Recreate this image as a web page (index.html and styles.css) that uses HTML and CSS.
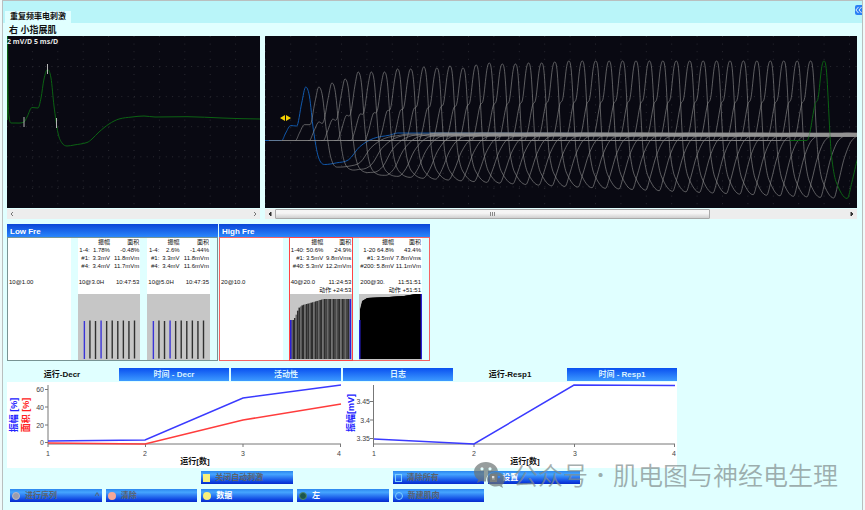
FILE: index.html
```html
<!DOCTYPE html>
<html lang="zh-CN">
<head>
  <meta charset="UTF-8">
  <meta name="viewport" content="width=device-width, initial-scale=1.0">
  <title>重复频率电刺激</title>
  <link rel="stylesheet" href="styles.css">
</head>
<body>
  <div class="app">
    <header class="header">
      <button class="tab-main">重复频率电刺激</button>
      <button class="collapse-btn" aria-label="收起">
        <svg viewBox="0 0 8 10"><path d="M4 1.5 1 5l3 3.500M7.500 1.500 4.500 5l3 3.500"/></svg>
      </button>
    </header>

    <main class="content">
      <h1 class="muscle">右 小指展肌</h1>

      <!-- Scopes -->
      <div class="scopes">
        <div class="scope">
          <svg id="scope-single" class="scope-screen" viewBox="0 0 253 172" preserveAspectRatio="none"></svg>
          <span class="scope-scale">2 mV/D 5 ms/D</span>
          <div class="scrollbar">
            <button class="scroll-arrow" aria-label="左"><svg viewBox="0 0 4 6"><path d="M3 1 1 3l2 2"/></svg></button>
            <div class="scroll-track"></div>
            <button class="scroll-arrow" aria-label="右"><svg viewBox="0 0 4 6"><path d="M1 1l2 2-2 2"/></svg></button>
          </div>
        </div>
        <div class="scope">
          <svg id="scope-train" class="scope-screen" viewBox="0 0 592 172" preserveAspectRatio="none"></svg>
          <div class="scrollbar">
            <button class="scroll-arrow dark" aria-label="左"><svg viewBox="0 0 4 6"><path d="M3 1 1 3l2 2z"/></svg></button>
            <div class="scroll-track"><div class="scroll-thumb"><i></i><i></i><i></i></div></div>
            <button class="scroll-arrow dark" aria-label="右"><svg viewBox="0 0 4 6"><path d="M1 1l2 2-2 2z"/></svg></button>
          </div>
        </div>
      </div>

      <!-- Series -->
      <div class="groups">
        <section class="group">
          <h2>Low Fre</h2>
          <div class="group-body">
            <div class="card"><div class="card-run"><span>10@1.00</span></div></div>
            <div class="card">
              <table>
                <tr><th></th><th>振幅</th><th>面积</th></tr>
                <tr><td>1-4:</td><td>1.78%</td><td>-0.48%</td></tr>
                <tr><td>#1:</td><td>3.3mV</td><td>11.8mVm</td></tr>
                <tr><td>#4:</td><td>3.4mV</td><td>11.7mVm</td></tr>
              </table>
              <div class="card-run"><span>10@3.0H</span><span>10:47:53</span></div>
              <svg class="bars" data-kind="low" viewBox="0 0 63 66" preserveAspectRatio="none"></svg>
            </div>
            <div class="card">
              <table>
                <tr><th></th><th>振幅</th><th>面积</th></tr>
                <tr><td>1-4:</td><td>2.6%</td><td>-1.44%</td></tr>
                <tr><td>#1:</td><td>3.3mV</td><td>11.8mVm</td></tr>
                <tr><td>#4:</td><td>3.4mV</td><td>11.6mVm</td></tr>
              </table>
              <div class="card-run"><span>10@5.0H</span><span>10:47:35</span></div>
              <svg class="bars" data-kind="low" viewBox="0 0 63 66" preserveAspectRatio="none"></svg>
            </div>
          </div>
        </section>

        <section class="group group-active">
          <h2>High Fre</h2>
          <div class="group-body">
            <div class="card"><div class="card-run"><span>20@10.0</span></div></div>
            <div class="card card-selected">
              <table>
                <tr><th></th><th>振幅</th><th>面积</th></tr>
                <tr><td>1-40:</td><td>50.6%</td><td>24.9%</td></tr>
                <tr><td>#1:</td><td>3.5mV</td><td>9.8mVms</td></tr>
                <tr><td>#40:</td><td>5.3mV</td><td>12.2mVm</td></tr>
              </table>
              <div class="card-run"><span>40@20.0</span><span>11:24:53</span></div>
              <div class="card-note">动作 +24:53</div>
              <svg class="bars" data-kind="forty" viewBox="0 0 63 66" preserveAspectRatio="none"></svg>
            </div>
            <div class="card">
              <table>
                <tr><th></th><th>振幅</th><th>面积</th></tr>
                <tr><td>1-20</td><td>64.8%</td><td>43.4%</td></tr>
                <tr><td>#1:</td><td>3.5mV</td><td>7.8mVms</td></tr>
                <tr><td>#200:</td><td>5.8mV</td><td>11.1mVm</td></tr>
              </table>
              <div class="card-run"><span>200@30.</span><span>11:51:51</span></div>
              <div class="card-note">动作 +51:51</div>
              <svg class="bars" data-kind="full" viewBox="0 0 63 66" preserveAspectRatio="none"></svg>
            </div>
          </div>
        </section>
      </div>

      <!-- Trends -->
      <div class="trends">
        <nav class="tabs">
          <button class="tab active">运行-Decr</button>
          <button class="tab">时间 - Decr</button>
          <button class="tab">活动性</button>
          <button class="tab">日志</button>
          <button class="tab active">运行-Resp1</button>
          <button class="tab">时间 - Resp1</button>
        </nav>
        <div class="charts">
          <svg class="chart" viewBox="0 0 335 86">
            <path class="axis" d="M41 3V62H334M38 7.500h3M38 25h3M38 43h3M38 60.500h3M41 62v3M138.500 62v3M236 62v3M333.500 62v3"/>
            <g class="ytext"><text x="37" y="10">60</text><text x="37" y="28">40</text><text x="37" y="46">20</text><text x="37" y="63">0</text></g>
            <g class="xtext"><text x="41" y="74">1</text><text x="138" y="74">2</text><text x="236" y="74">3</text><text x="332" y="74">4</text></g>
            <path class="line-red" d="M41 61 138 62 236 38 334 22"/>
            <path class="line-blue" d="M41 59 138 58 236 16 334 3"/>
            <text class="label" x="188" y="82">运行[数]</text>
            <text class="label blue" transform="translate(10 33) rotate(-90)">振幅 [%]</text>
            <text class="label red" transform="translate(22 33) rotate(-90)">面积 [%]</text>
          </svg>
          <svg class="chart" viewBox="0 0 335 86">
            <path class="axis" d="M31.500 3V62H333M28 19.500h3M28 38h3M28 56.500h3M31.500 62v3M132 62v3M232.500 62v3M332.500 62v3"/>
            <g class="ytext"><text x="28" y="22">3.45</text><text x="28" y="41">3.4</text><text x="28" y="59">3.35</text></g>
            <g class="xtext"><text x="32" y="74">1</text><text x="132" y="74">2</text><text x="233" y="74">3</text><text x="332" y="74">4</text></g>
            <path class="line-blue" d="M32 57 132 62 232 3 333 3.500"/>
            <text class="label" x="183" y="82">运行[数]</text>
            <text class="label blue" transform="translate(12 31) rotate(-90)">振幅[mV]</text>
          </svg>
        </div>
      </div>

      <!-- Actions -->
      <div class="actions">
        <button class="btn col-3" disabled><i class="mark yellow"></i>关闭自动刺激</button>
        <button class="btn col-5" disabled><i class="mark outline"></i>清除所有</button>
        <button class="btn col-6"><i class="mark stop"></i>设置</button>
        <button class="btn col-1" disabled><i class="mark round gray"></i>进行序列<span class="caret">^</span></button>
        <button class="btn" disabled><i class="mark round pink"></i>清除</button>
        <button class="btn"><i class="mark round yellow"></i>数据</button>
        <button class="btn"><i class="mark round green"></i>左</button>
        <button class="btn" disabled><i class="mark round outline"></i>新建肌肉</button>
      </div>

      <div class="watermark">
        <svg viewBox="0 0 32 28">
          <path fill-rule="evenodd" d="M13 2C6 2 1 6.500 1 12c0 3 1.500 5.800 4.200 7.600L4 23l4.200-2.100c1.500.5 3 .7 4.800.7-.2-6.500 4.500-10.600 12-10.600C24 5.500 19 2 13 2zM9 7.200a1.600 1.600 0 1 1 0 3.200 1.600 1.600 0 0 1 0-3.200zm8 0a1.600 1.600 0 1 1 0 3.200 1.600 1.600 0 0 1 0-3.200z"/>
          <path fill-rule="evenodd" d="M23 12c-5 0-9 3.300-9 7.300s4 7.300 9 7.300c1.200 0 2.300-.2 3.300-.5L30 28l-1-3c2-1.500 3-3.400 3-5.700 0-4-4-7.300-9-7.300zm-3 3.800a1.300 1.300 0 1 1 0 2.600 1.300 1.300 0 0 1 0-2.600zm6 0a1.300 1.300 0 1 1 0 2.600 1.300 1.300 0 0 1 0-2.600z"/>
        </svg>
        <span>公众号</span><span class="dot">·</span><span>肌电图与神经电生理</span>
      </div>
    </main>
  </div>
  <script src="script.js"></script>
</body>
</html>
```
FILE: styles.css
```css
* {
  margin: 0;
  padding: 0;
  box-sizing: border-box;
}

body {
  min-height: 100vh;
  padding: 0 2px;
  background: #eefafa;
  font-family: "Liberation Sans", "Noto Sans CJK SC", sans-serif;
  font-size: 8px;
  color: #111;
}

button {
  border: none;
  background: none;
  font: inherit;
  color: inherit;
}

.app {
  min-height: 100vh;
  background: #e0ffff;
  border: 1px solid #b9bfbf;
  border-bottom: none;
}

.header {
  display: flex;
  justify-content: space-between;
  align-items: flex-end;
  height: 22px;
  padding-left: 2px;
  background: #b9f5f9;
}

.tab-main {
  height: 12px;
  padding: 0 5px;
  background: #e0ffff;
  font-weight: bold;
  line-height: 12px;
}

.collapse-btn {
  align-self: flex-start;
  width: 7px;
  height: 10px;
  margin-top: 4px;
  border-radius: 2px 0 0 2px;
  background: #2b80f5;
}

.collapse-btn svg {
  display: block;
  width: 7px;
  height: 10px;
  fill: none;
  stroke: #fff;
}

.content {
  position: relative;
  padding: 0 5px 0 4px;
}

.muscle {
  height: 13px;
  padding-left: 2px;
  font-size: 9px;
  line-height: 15px;
}

/* Scopes */
.scopes {
  display: grid;
  grid-template-columns: 253fr 592fr;
  gap: 5px;
  margin-bottom: 5px;
}

.scope {
  position: relative;
}

.scope-screen {
  display: block;
  width: 100%;
  height: 172px;
  background: #090912;
}

.scope-screen path,
.scope-screen line {
  fill: none;
  stroke-width: 1;
}

.scope-screen .grid {
  stroke: #2a2a32;
}

.scope-screen .trace {
  stroke: #8a8a8a;
  stroke-opacity: 0.65;
}

.scope-screen .trace.first {
  stroke: #1159ad;
  stroke-opacity: 1;
}

.scope-screen .trace.last {
  stroke: #0b6313;
  stroke-opacity: 1;
}

.scope-screen .cursor {
  stroke: #b5b5b5;
}

.scope-screen .band {
  stroke: #999;
  stroke-width: 4;
  stroke-opacity: 0.6;
}

.scope-screen .handle {
  fill: #f5d000;
}

.scope-scale {
  position: absolute;
  top: 1px;
  left: 0;
  font-family: "Noto Sans", sans-serif;
  font-size: 7px;
  font-weight: bold;
  line-height: 9px;
  color: #e4e4e4;
}

.scrollbar {
  display: flex;
  height: 10px;
  margin-top: 1px;
  background: #ededed;
}

.scroll-arrow {
  width: 10px;
}

.scroll-arrow svg {
  display: block;
  width: 4px;
  height: 6px;
  margin: 0 auto;
  fill: none;
  stroke: #777;
}

.scroll-arrow.dark svg {
  fill: #333;
  stroke: #333;
}

.scroll-track {
  flex: 1;
}

.scroll-thumb {
  display: flex;
  justify-content: center;
  align-items: center;
  gap: 1px;
  width: 76%;
  height: 10px;
  border: 1px solid #a9a9a9;
  border-radius: 1px;
  background: linear-gradient(#f5f5f5 40%, #cfcfcf);
}

.scroll-thumb i {
  width: 1px;
  height: 4px;
  background: #888;
}

/* Series */
.groups {
  display: flex;
  gap: 1px;
  margin-bottom: 7px;
}

.group {
  width: 211px;
}

.group h2 {
  height: 13px;
  padding-left: 3px;
  background: linear-gradient(#0a45d8, #2a86fb);
  font-size: 8px;
  line-height: 15px;
  color: #fff;
}

.group-body {
  display: grid;
  grid-template-columns: repeat(3, 1fr);
  gap: 7px;
  height: 124px;
  padding-right: 7px;
  border: 1px solid #789494;
}

.group-active .group-body {
  border-color: #f46464;
}

.card {
  display: flex;
  flex-direction: column;
  min-width: 0;
  background: #fff;
  font-size: 6px;
  line-height: 8px;
  white-space: nowrap;
}

.card:first-child {
  padding-top: 40px;
}

.card-selected {
  outline: 1px solid #f44;
}

.card table {
  width: 100%;
  margin-bottom: 8px;
  padding-right: 1px;
  border-spacing: 0;
}

.card th,
.card td {
  height: 8px;
  text-align: right;
}

.card th {
  font-weight: normal;
}

.card-run {
  display: flex;
  justify-content: space-between;
  padding: 0 1px;
}

.card-note {
  padding-right: 1px;
  text-align: right;
}

.bars {
  display: block;
  width: 100%;
  height: 66px;
  margin-top: auto;
  background: #c6c6c6;
}

/* Trends */
.trends {
  max-width: 670px;
  margin-bottom: 3px;
}

.tabs {
  display: grid;
  grid-template-columns: repeat(6, 1fr);
  gap: 2px;
  margin-bottom: 1px;
}

.tab {
  height: 13px;
  background: linear-gradient(#0a50f0, #3d9bff);
  font-weight: bold;
  line-height: 13px;
  color: #d8f2ff;
}

.tab.active {
  background: none;
  color: #111;
}

.charts {
  display: grid;
  grid-template-columns: 1fr 1fr;
  background: #fff;
}

.chart {
  display: block;
  width: 100%;
}

.chart path {
  fill: none;
}

.chart text {
  font-size: 7px;
  fill: #444;
}

.chart .axis {
  stroke: #777;
}

.chart .line-blue {
  stroke: #3a3aff;
  stroke-width: 1.5;
}

.chart .line-red {
  stroke: #ff3c3c;
  stroke-width: 1.5;
}

.chart .ytext {
  text-anchor: end;
}

.chart .xtext,
.chart .label {
  text-anchor: middle;
}

.chart .label {
  font-size: 8px;
  font-weight: bold;
  fill: #111;
}

.chart .label.blue {
  font-size: 9px;
  fill: #22f;
}

.chart .label.red {
  font-size: 9px;
  fill: #f22;
}

/* Actions */
.actions {
  display: grid;
  grid-template-columns: repeat(6, 1fr);
  gap: 5px 4px;
  max-width: 573px;
  padding-left: 3px;
}

.col-1 { grid-column: 1; }
.col-3 { grid-column: 3; }
.col-5 { grid-column: 5; }
.col-6 { grid-column: 6; }

.btn {
  display: flex;
  align-items: center;
  gap: 5px;
  height: 13px;
  padding: 0 2px;
  background: linear-gradient(#2c86ee, #45a5ff 25%, #0b3fe0 85%, #0a2bc8);
  font-size: 8px;
  font-weight: bold;
  line-height: 13px;
  color: #fff;
}

.btn:disabled {
  color: #5a626e;
}

.mark {
  width: 7px;
  height: 8px;
}

.mark.round {
  width: 8px;
  border-radius: 50%;
}

.mark.yellow { background: #f8f07c; }
.mark.gray { background: #9c9cac; border: 1px solid #b8b8c8; }
.mark.pink { background: #f5a898; }
.mark.green { background: #1d564c; border: 1px solid #4d8a70; }
.mark.outline { border: 1px solid #7fd0ff; }
.mark.stop { background: #ddd; border: 2px solid #999; }

.caret {
  margin-left: auto;
}

.watermark {
  position: absolute;
  right: 24px;
  bottom: 12px;
  display: flex;
  align-items: center;
  height: 32px;
  font-family: "Noto Sans CJK SC", sans-serif;
  font-size: 25px;
  font-weight: 350;
  line-height: 32px;
  color: #808c8c;
  opacity: 0.7;
  white-space: nowrap;
  pointer-events: none;
}

.watermark svg {
  width: 32px;
  height: 28px;
  margin-right: 8px;
  fill: #6c7474;
}

.watermark .dot {
  width: 25px;
  font-size: 16px;
  font-weight: bold;
  text-align: center;
}
```
FILE: script.js
```js
const NS = 'http://www.w3.org/2000/svg';

function add(svg, tag, attrs) {
  const el = document.createElementNS(NS, tag);
  for (const key in attrs) el.setAttribute(key, attrs[key]);
  svg.appendChild(el);
}

// Smooth curve through the points that does not overshoot at peaks
function smooth(pts) {
  let d = `M${pts[0][0]} ${pts[0][1]}`;
  for (let i = 0; i < pts.length - 1; i++) {
    const a = pts[i - 1] || pts[i], b = pts[i], c = pts[i + 1], e = pts[i + 2] || c;
    const k = (c[0] - b[0]) / 3;
    const s1 = c[0] === a[0] ? 0 : (c[1] - a[1]) / (c[0] - a[0]);
    const s2 = e[0] === b[0] ? 0 : (e[1] - b[1]) / (e[0] - b[0]);
    const flat1 = (b[1] - a[1]) * (c[1] - b[1]) <= 0;
    const flat2 = (c[1] - b[1]) * (e[1] - c[1]) <= 0;
    d += `C${b[0] + k} ${b[1] + (flat1 ? 0 : s1 * k)} ${c[0] - k} ${c[1] - (flat2 ? 0 : s2 * k)} ${c[0]} ${c[1]}`;
  }
  return d;
}

function drawGrid(svg, width, startX) {
  for (let x = startX; x < width; x += 25.4) {
    add(svg, 'line', { class: 'grid', x1: x, x2: x, y1: 0, y2: 172, 'stroke-dasharray': '1 6.6' });
  }
  for (let y = 30.5; y < 172; y += 30.1) {
    add(svg, 'line', { class: 'grid', x1: 0, x2: width, y1: y, y2: y, 'stroke-dasharray': '1 5.35' });
  }
}

// Single response
const single = document.getElementById('scope-single');
drawGrid(single, 253, 25.4);
add(single, 'path', {
  class: 'trace last',
  d: smooth([[0.5, 0], [1, 60], [2, 80], [4, 87], [9, 87], [17, 86], [20, 81], [25, 71.5], [31, 72], [34, 62],
    [37, 43], [40.5, 33.5], [44, 42], [47, 70], [51, 97], [55, 107], [60, 110], [67, 109], [80, 106.500], [85, 103],
    [92, 96], [102, 88], [112, 83], [125, 81], [137, 80], [148, 81], [180, 80.7], [215, 82], [253, 83]])
});
add(single, 'line', { class: 'trace last', x1: 0.5, x2: 0.5, y1: 0, y2: 84 });
for (const [x, y] of [[17, 81], [40.5, 28], [49.5, 82]]) {
  add(single, 'line', { class: 'cursor', x1: x, x2: x, y1: y, y2: y + 10 });
}

// Train of 40 responses: x offset from the peak, level as a share of peak (+) or trough (-)
const early = [[-24, 0], [-20, .14], [-15, .28], [-9, .27], [-4, .7], [0, 1], [3.7, .83], [7.7, .2], [12.7, -.69],
  [19, -1], [31, -.93], [43, -.8], [54, -.26], [68, .04], [84, .1]];
const late = [[-17, 0], [-14, .1], [-9, .45], [-5.7, .54], [-2.3, .91], [0, 1], [2.7, .86], [6, .1], [7.7, -.28],
  [12, -.7], [23.3, -1], [28, -.72], [34, -.3], [42, .01], [56, .08]];
const tops = [51, 51, 47, 43, 36, 36, 36, 33, 33, 31, 32, 30, 32, 29, 27, 28, 28, 27, 27, 26];
const base = 104.5;

const train = document.getElementById('scope-train');
drawGrid(train, 592, 0.3);

function drawResponse(i) {
  const cx = i < 20 ? 40.7 + i * 13.1 : 303.7 + (i - 20) * 13.43;
  const mix = i === 39 ? 1 : 1 - Math.exp(-Math.pow(i / 6, 1.3));
  const up = base - (tops[i] || 25);
  const down = 24 + 8 * Math.min(1, i / 4) + 26 * Math.pow(i / 39, 0.8);
  const pts = [[Math.max(0, cx - (i === 39 ? 34 : 50)), base]];
  early.forEach(([dx, v], n) => {
    const x = dx + (late[n][0] - dx) * mix;
    const level = v + (late[n][1] - v) * mix;
    pts.push([cx + x, base - level * (level > 0 ? up : down)]);
  });
  const end = pts[pts.length - 1][0];
  if (end < 592) pts.push([Math.max(end + 8, 130 + i * 5), 97 + i % 4], [600, 98 + i % 3]);
  const type = i === 0 ? ' first' : i === 39 ? ' last' : '';
  add(train, 'path', { class: 'trace' + type, d: smooth(pts) });
}

drawResponse(0);
for (let i = 1; i < 40; i++) drawResponse(i);
add(train, 'line', { class: 'band', x1: 165, x2: 592, y1: 98.5, y2: 98.5 });
add(train, 'path', { class: 'handle', d: 'M15 82l5-3v6zM26 82l-5-3v6z' });

// Amplitude bars
const profiles = {
  forty: [[0, 39], [3, 39], [5, 43], [8, 51], [12, 54], [16, 55], [23, 57], [33, 60], [63, 60]],
  full: [[0, 39], [1, 50], [3, 58], [8, 61], [30, 62], [45, 63], [63, 66]]
};

function levelAt(profile, x) {
  const n = profile.findIndex(p => p[0] >= x) || 1;
  const [a, b] = [profile[n - 1], profile[n]];
  return a[1] + (b[1] - a[1]) * (x - a[0]) / (b[0] - a[0]);
}

document.querySelectorAll('.bars').forEach(svg => {
  const kind = svg.dataset.kind;
  if (kind === 'low') {
    for (let i = 0; i < 10; i++) {
      const fill = i === 0 || i === 3 ? '#3a34d8' : '#303030';
      add(svg, 'rect', { x: 5.7 + i * 5.6, y: 27 - i % 2 * 0.5, width: 1.4, height: 38, fill });
    }
    return;
  }
  const count = kind === 'forty' ? 40 : 200;
  const step = (kind === 'forty' ? 60 : 62) / count;
  for (let i = 0; i < count; i++) {
    const x = 1 + i * step;
    const h = levelAt(profiles[kind], x);
    const fill = kind === 'full' ? '#000' : i % 3 ? '#2e2e2e' : '#6a6a6a';
    add(svg, 'rect', { x, y: 65 - h, width: kind === 'full' ? 1 : step + 0.1, height: h, fill });
  }
  // first and last response are the measured pair
  const edge = count * step;
  add(svg, 'rect', { x: 0, y: 26, width: 1.5, height: 39, fill: '#2a20d8' });
  add(svg, 'rect', { x: edge, y: 65 - levelAt(profiles[kind], edge), width: 1.5, height: levelAt(profiles[kind], edge), fill: '#2a20d8' });
});
```
